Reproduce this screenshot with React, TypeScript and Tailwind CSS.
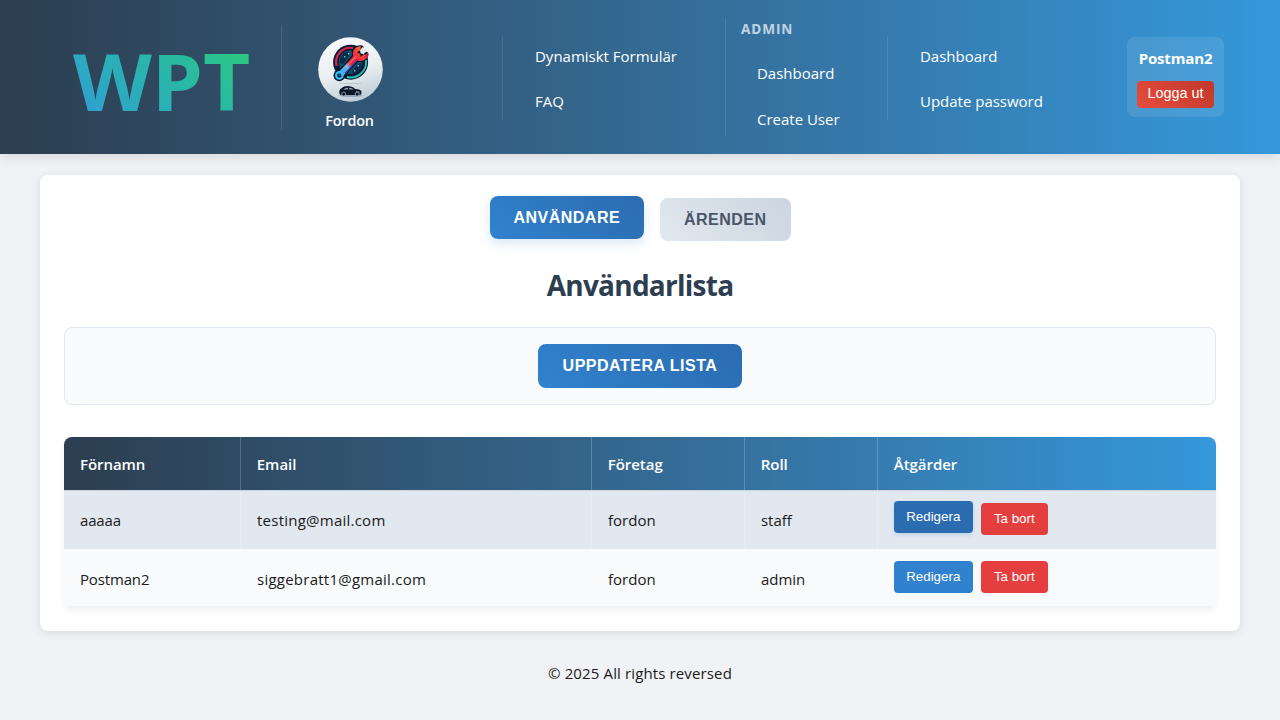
import type { ReactNode } from "react";

function Emblem() {
  return (
    <svg width="65" height="65" viewBox="0 0 65 65" className="block">
      <defs>
        <linearGradient id="disc" x1="0.3" y1="0" x2="0.6" y2="1">
          <stop offset="0" stopColor="#f8fafb" />
          <stop offset="0.55" stopColor="#e9eeef" />
          <stop offset="1" stopColor="#bccdd6" />
        </linearGradient>
        <linearGradient id="wrench" gradientUnits="userSpaceOnUse" x1="20" y1="39" x2="48" y2="11">
          <stop offset="0" stopColor="#1fa9e6" />
          <stop offset="0.34" stopColor="#62b4ee" />
          <stop offset="0.44" stopColor="#e8283f" />
          <stop offset="0.72" stopColor="#f0343a" />
          <stop offset="0.9" stopColor="#fb6a2c" />
          <stop offset="1" stopColor="#ff9a2b" />
        </linearGradient>
      </defs>
      <circle cx="32.5" cy="32.5" r="32.3" fill="url(#disc)" />
      <circle cx="32.6" cy="25.2" r="17.5" fill="#0a1a36" />
      <path d="M18.6 29A14.4 14.4 0 0 1 35 11" fill="none" stroke="#d8264a" strokeWidth="2.2" />
      <path d="M48 23A15.4 15.4 0 0 1 29 40" fill="none" stroke="#25c3b4" strokeWidth="1.9" />
      <circle cx="32.6" cy="25.2" r="11.8" fill="#125068" />
      <path d="M21.5 26a11.5 11.5 0 0 1 8.5-11.5l1 4-6 8.5zM44 26a11.5 11.5 0 0 1-9 11l-1-3 6-7z" fill="#0b2a4a" />
      <path d="M26 19h1.4v1.4H26zM30 16h1.4v1.4H30zM39.5 28H41v1.4h-1.5zM36 33h1.4v1.4H36z" fill="#4bd6c9" />
      <g fill="none" strokeLinecap="round">
        <path d="M21.8 38.2L38.5 20" stroke="#081430" strokeWidth="8.6" />
        <circle cx="21.3" cy="38.4" r="5.8" fill="#081430" />
        <path d="M42.6 11.5A5.2 5.2 0 1 0 47.3 17.6" stroke="#081430" strokeWidth="6.4" />
        <path d="M22 38L39.5 19" stroke="url(#wrench)" strokeWidth="6" />
        <path d="M42.6 11.5A5.2 5.2 0 1 0 47.3 17.6" stroke="url(#wrench)" strokeWidth="4.4" strokeLinecap="butt" />
      </g>
      <path d="M44.2 10.2L42 13.6l.8 2.8 2.9.5 3.3-2.8-1.1-3.2z" fill="#e6ecef" />
      <path d="M46.4 19.8l3.5-4.7v4.6l-3.4 3.2z" fill="#d92348" />
      <path d="M27 31L38 19.2" stroke="#ff8d80" strokeWidth="0.9" />
      <path d="M27 36.4L39.6 22.6" stroke="#3d36a8" strokeWidth="1.2" />
      <circle cx="21.3" cy="38.4" r="4.3" fill="#35c0f2" />
      <circle cx="21.3" cy="38.4" r="2.2" fill="#0a2448" />
      <circle cx="21.5" cy="38.2" r="0.8" fill="#1d83bd" />
      <ellipse cx="32.5" cy="46.4" rx="12" ry="0.5" fill="#b4c3cb" />
      <ellipse cx="33" cy="58.6" rx="11.5" ry="1.5" fill="#93a7b6" />
      <path
        d="M21.5 57c-.6-3 .2-4.9 2-5.8 3.2-2.8 9.5-3 13.8.8 3.3.3 5.8 1.1 6.2 2.6l-.2 2.7-2.1.6H22.6z"
        fill="#0d1728"
      />
      <path d="M25.3 52.4c1.6-1.3 3-1.7 4.7-1.7v1.9zM31.2 50.7c2 0 3.2.5 4.5 1.7l-4.5.2z" fill="#8fa1af" />
      <path d="M38 54.6l3.6.6" stroke="#90a3b2" strokeWidth="0.8" />
      <circle cx="25.7" cy="57.1" r="2" fill="#0d1728" stroke="#b9c8d2" strokeWidth="0.7" />
      <circle cx="39.2" cy="57.1" r="2" fill="#0d1728" stroke="#b9c8d2" strokeWidth="0.7" />
    </svg>
  );
}

function NavLink({ children }: { children: ReactNode }) {
  return (
    <a className="block whitespace-nowrap text-[15px] leading-6 tracking-[-0.01px] text-white">{children}</a>
  );
}

function Header() {
  return (
    <header className="flex h-[154px] items-start bg-linear-to-r from-[#2c3e50] to-[#3498db] shadow-[0_4px_12px_rgba(0,0,0,0.1)]">
      <div className="mt-[25px] h-[105px] w-[282px] border-r border-white/10 pl-[73px]">
        <div className="w-[170px] origin-left scale-x-[1.04] bg-linear-45 from-[#3498db] to-[#2ecc71] bg-clip-text text-[78.5px] leading-[111px] font-bold tracking-[-0.1px] text-transparent">
          WPT
        </div>
      </div>
      <div className="mt-9 flex h-[84px] w-[221px] items-start border-r border-white/10 pl-[35px] pt-[0.5px]">
        <div className="flex w-[66px] flex-col items-center">
          <Emblem />
          <span className="mt-[7px] -ml-[1px] text-[14.4px] leading-6 font-semibold tracking-[-0.15px] text-white">
            Fordon
          </span>
        </div>
      </div>
      <nav className="mt-9 flex h-[84px] w-[222px] flex-col gap-[21px] pt-2 pl-8">
        <NavLink>Dynamiskt Formulär</NavLink>
        <NavLink>FAQ</NavLink>
      </nav>
      <nav className="mt-[18px] h-[119px] w-[162px] border-l border-white/10 pl-[15px]">
        <div className="text-[13.6px] leading-[22px] font-bold tracking-[0.9px] text-white/70">ADMIN</div>
        <div className="flex flex-col gap-[22px] pt-[21px] pl-4">
          <NavLink>Dashboard</NavLink>
          <NavLink>Create User</NavLink>
        </div>
      </nav>
      <nav className="mt-9 flex h-[84px] w-[240px] flex-col gap-[21px] border-l border-white/10 pt-2 pl-8">
        <NavLink>Dashboard</NavLink>
        <NavLink>Update password</NavLink>
      </nav>
      <div className="mt-[37px] flex h-20 w-[97px] flex-col items-center rounded-lg bg-white/10 pt-[9px]">
        <span className="text-[15px] leading-6 font-bold tracking-[-0.15px] text-white">Postman2</span>
        <button className="mt-[11px] h-[27px] w-[77px] rounded bg-linear-45 from-[#e74c3c] to-[#c0392b] pb-[2px] font-['Liberation_Sans',sans-serif] text-[14.4px] leading-[25px] whitespace-nowrap text-white">
          Logga ut
        </button>
      </div>
    </header>
  );
}

type User = { name: string; email: string; company: string; role: string; hovered?: boolean };

const users: User[] = [
  { name: "aaaaa", email: "testing@mail.com", company: "fordon", role: "staff", hovered: true },
  { name: "Postman2", email: "siggebratt1@gmail.com", company: "fordon", role: "admin" },
];

const columns = "grid grid-cols-[177px_351px_153px_133px_338px]";
const cell = "border-r border-white/20 pl-4";
const action =
  "rounded h-8 font-['Liberation_Sans',sans-serif] text-[13.33px] leading-8 font-medium text-white";

function UserTable() {
  const headings = ["Förnamn", "Email", "Företag", "Roll", "Åtgärder"];
  return (
    <div className="mt-8 overflow-hidden rounded-lg text-[15px] shadow-[0_4px_6px_rgba(0,0,0,0.05)]">
      <div className={`${columns} h-[53px] bg-linear-to-r from-[#2c3e50] to-[#3498db]`}>
        {headings.map((h) => (
          <div
            key={h}
            className="border-r border-white/20 pt-[15px] pl-[15.8px] leading-6 font-semibold tracking-[-0.05px] text-white first:pl-4 last:border-r-0"
          >
            {h}
          </div>
        ))}
      </div>
      {users.map((u) => {
        const pad = u.hovered ? "pt-[17px]" : "pt-[18px]";
        return (
          <div
            key={u.name}
            className={`${columns} leading-6 text-[#1a1a1a] ${u.hovered ? "h-[59px] border-t border-[#cbd5e0] bg-[#e2e8f0]" : "h-[58px] border-b border-[#edf0f4] bg-[#f8fafc]"}`}
          >
            <div className={`${cell} ${pad} tracking-[-0.15px]`}>{u.name}</div>
            <div className={`${cell} ${pad} tracking-[0.24px]`}>{u.email}</div>
            <div className={`${cell} ${pad} tracking-[0px]`}>{u.company}</div>
            <div className={`${cell} ${pad} tracking-[-0.05px]`}>{u.role}</div>
            <div className="flex items-start gap-2 pt-3 pl-[15.5px]">
              <button
                className={`${action} w-[79.5px] ${u.hovered ? "-mt-[2px] bg-[#2b6cb0] shadow-[0_2px_4px_rgba(49,130,206,0.2)]" : "bg-[#3182ce]"}`}
              >
                Redigera
              </button>
              <button className={`${action} w-[66.5px] bg-[#e53e3e]`}>Ta bort</button>
            </div>
          </div>
        );
      })}
    </div>
  );
}

const bigButton =
  "rounded-lg font-['Liberation_Sans',sans-serif] text-base font-bold tracking-[0.5px] whitespace-nowrap";

export default function App() {
  return (
    <div className="h-[720px] w-[1280px] overflow-hidden bg-[#f0f2f5] font-['Open_Sans','Noto_Sans',sans-serif]">
      <Header />
      <main className="mx-auto mt-[21px] h-[456px] w-[1200px] rounded-lg bg-white px-6 pt-[21px] shadow-[0_2px_10px_rgba(0,0,0,0.1)]">
        <div className="flex justify-center gap-4">
          <button
            className={`${bigButton} h-[43px] w-[154.5px] bg-linear-45 from-[#3182ce] to-[#2b6cb0] leading-[43px] text-white shadow-[0_4px_12px_rgba(49,130,206,0.2)]`}
          >
            ANVÄNDARE
          </button>
          <button
            className={`${bigButton} mt-[2px] h-[43px] w-[130.5px] bg-linear-45 from-[#e2e8f0] to-[#cbd5e0] leading-[43px] text-[#4a5568]`}
          >
            ÄRENDEN
          </button>
        </div>
        <h1 className="mt-[22px] text-center text-[28px] leading-[44px] font-bold tracking-[-0.75px] text-[#2c3e50]">
          Användarlista
        </h1>
        <div className="mt-5 flex h-[78px] justify-center rounded-lg border border-[#e2e8f0] bg-[#f8fafc] pt-4">
          <button
            className={`${bigButton} h-11 w-[203.5px] bg-linear-45 from-[#3182ce] to-[#2b6cb0] pb-px leading-[43px] text-white`}
          >
            UPPDATERA LISTA
          </button>
        </div>
        <UserTable />
      </main>
      <footer className="mt-[30px] text-center text-[15px] leading-6 tracking-[0.13px] text-[#1a1a1a]">
        © 2025 All rights reversed
      </footer>
    </div>
  );
}
